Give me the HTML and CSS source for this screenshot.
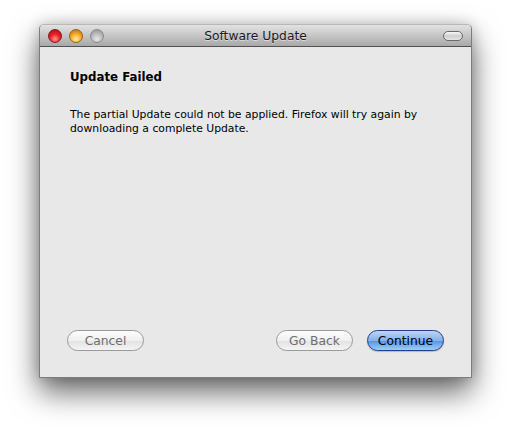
FILE: index.html
```html
<!DOCTYPE html>
<html>
	<head>
		<meta charset="utf-8" />
		<title>Software Update</title>
		<link rel="stylesheet" href="styles.css">
	</head>
	<body>
		<div class="window">
			<div class="titlebar">
				<div class="lights">
					<span class="light red"></span>
					<span class="light yellow"></span>
					<span class="light grey"></span>
				</div>
				<div class="title">Software Update</div>
				<div class="toolbar-btn-box"><span class="toolbar-btn"></span></div>
			</div>
			<div class="content">
				<h1 class="heading">Update Failed</h1>
				<p class="message">The partial Update could not be applied. Firefox will try again by downloading a complete Update.</p>
				<div class="buttons">
					<button class="btn" disabled>Cancel</button>
					<div class="spacer"></div>
					<button class="btn" disabled>Go Back</button>
					<button class="btn primary">Continue</button>
				</div>
			</div>
		</div>
	</body>
</html>
```

FILE: styles.css
```css
html,body{margin:0;padding:0}
body{
	background:#fff;
	font-family:"DejaVu Sans","Liberation Sans",sans-serif;
	color:#000;
	min-height:433px;
	padding-top:24px;
	box-sizing:border-box;
}
.window{
	width:431px;
	height:352px;
	margin-left:39px;
	border:1px solid #7c7c7c;
	border-top-color:#b8b8b8;
	border-radius:5px 5px 0 0;
	background:#e8e8e8;
	display:flex;
	flex-direction:column;
	box-shadow:0 14px 30px rgba(0,0,0,0.6), 0 0 14px rgba(0,0,0,0.18);
}
.titlebar{
	height:21px;
	display:grid;
	grid-template-columns:1fr auto 1fr;
	align-items:center;
	background:linear-gradient(#e2e2e2,#c6c6c6 50%,#a8a8a8);
	border-bottom:1px solid #515151;
	border-radius:4px 4px 0 0;
}
.lights{
	display:flex;
	gap:7px;
	padding-left:8px;
}
.light{
	width:14px;
	height:14px;
	border-radius:50%;
	box-sizing:border-box;
}
.light.red{
	background:radial-gradient(circle at 50% 75%,#ff9a8c 0,#e8202a 45%,#a50d14 100%);
	border:1px solid #8a1a1a;
}
.light.yellow{
	background:radial-gradient(circle at 50% 75%,#fff2a0 0,#f5a623 50%,#b06a0d 100%);
	border:1px solid #98601a;
}
.light.grey{
	background:radial-gradient(circle at 50% 75%,#e8e8e8 0,#b6b6b6 55%,#909090 100%);
	border:1px solid #8a8a8a;
}
.title{
	font-size:12.3px;
	color:#1a1a1a;
	text-shadow:0 1px 0 rgba(255,255,255,0.5);
}
.toolbar-btn-box{
	display:flex;
	justify-content:flex-end;
	padding-right:8px;
}
.toolbar-btn{
	width:20px;
	height:10px;
	box-sizing:border-box;
	border:1px solid #6a6a6a;
	border-radius:5px;
	background:linear-gradient(#fafafa,#cfcfcf 50%,#e6e6e6);
}
.content{
	flex:1;
	display:flex;
	flex-direction:column;
	padding:22px 27px 26px 30px;
}
.heading{
	margin:0;
	font-size:11.8px;
	font-weight:bold;
	line-height:16px;
}
.message{
	margin:23px 0 0 0;
	font-size:10.8px;
	line-height:14px;
}
.buttons{
	margin-top:auto;
	margin-left:-3px;
	display:flex;
	gap:14px;
}
.spacer{flex:1}
.btn{
	height:21px;
	width:77px;
	padding:0;
	border:1px solid #9a9a9a;
	border-radius:11px;
	background:linear-gradient(#fdfdfd,#f0f0f0 50%,#e2e2e2 51%,#f4f4f4);
	font-family:"DejaVu Sans","Liberation Sans",sans-serif;
	font-size:12.3px;
	color:#6e6e6e;
}
.btn.primary{
	border-color:#1f3f88;
	color:#000;
	background:linear-gradient(#bcd6f6,#85b0ea 50%,#5592e2 51%,#9ccdfa);
	box-shadow:0 1px 1px rgba(0,0,0,0.2);
}
```
